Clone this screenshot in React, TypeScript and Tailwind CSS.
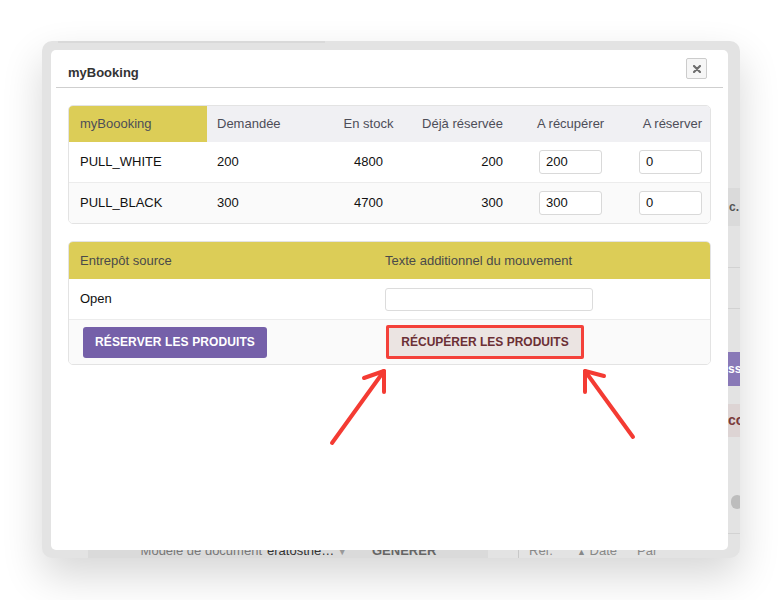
import React from "react";

const font = { fontFamily: '"Liberation Sans", Arial, sans-serif' };

function NumInput({ value, width }: { value: string; width: string }) {
  return (
    <div className={`${width} h-[24px] rounded-[3px] border border-[#d9d9d9] bg-white pl-[6px] flex items-center text-[13px] text-[#111]`}>
      {value}
    </div>
  );
}

const rows = [
  { name: "PULL_WHITE", asked: "200", stock: "4800", booked: "200", get: "200", book: "0" },
  { name: "PULL_BLACK", asked: "300", stock: "4700", booked: "300", get: "300", book: "0" },
];

function ProductsTable() {
  return (
    <div className="rounded-[5px] border border-[#e3e3e3] overflow-hidden text-[13px]">
      <div className="grid grid-cols-[138px_123px_77px_105px_100px_98px] h-[36px] bg-[#f0f0f3] text-[#4d4d58] items-center">
        <div className="h-full bg-[#dccd57] flex items-center pl-[11px]">myBoooking</div>
        <div className="pl-[10px]">Demandée</div>
        <div className="text-center">En stock</div>
        <div className="text-right pr-[9px]">Déjà réservée</div>
        <div className="pl-[25px]">A récupérer</div>
        <div className="text-right pr-[8px]">A réserver</div>
      </div>
      {rows.map((r, i) => (
        <div
          key={r.name}
          className={`grid grid-cols-[138px_123px_77px_105px_100px_98px] items-center text-[#111] ${i === 0 ? "h-[40px] bg-white" : "h-[41px] bg-[#fafafa] border-t border-[#ececec]"}`}
        >
          <div className="pl-[11px]">{r.name}</div>
          <div className="pl-[10px]">{r.asked}</div>
          <div className="text-center">{r.stock}</div>
          <div className="text-right pr-[9px]">{r.booked}</div>
          <div className="pl-[27px]">
            <NumInput value={r.get} width="w-[63px]" />
          </div>
          <div className="flex justify-end pr-[8px]">
            <NumInput value={r.book} width="w-[63px]" />
          </div>
        </div>
      ))}
    </div>
  );
}

function MoveTable() {
  return (
    <div className="rounded-[5px] border border-[#e3e3e3] overflow-hidden text-[13px]">
      <div className="grid grid-cols-[306px_335px] h-[37px] bg-[#dccd57] text-[#4a4a4a] items-center">
        <div className="pl-[11px]">Entrepôt source</div>
        <div className="pl-[10px]">Texte additionnel du mouvement</div>
      </div>
      <div className="grid grid-cols-[306px_335px] h-[40px] bg-white items-center text-[#111]">
        <div className="pl-[11px]">Open</div>
        <div className="pl-[10px]">
          <div className="w-[208px] h-[23px] rounded-[3px] border border-[#dcdcdc] bg-white" />
        </div>
      </div>
      <div className="grid grid-cols-[306px_335px] h-[45px] bg-[#fafafa] border-t border-[#ececec] items-center">
        <div className="pl-[14px]">
          <button className="w-[184px] h-[31px] rounded-[3px] bg-[#7560a9] text-white font-bold text-[12px] tracking-[0.1px]">
            RÉSERVER LES PRODUITS
          </button>
        </div>
        <div className="pl-[11px]">
          <button className="w-[198px] h-[34px] border-[3px] border-[#f4413a] rounded-[2px] bg-[#ebe4e2] text-[#6b2f35] font-bold text-[12px]">
            RÉCUPÉRER LES PRODUITS
          </button>
        </div>
      </div>
    </div>
  );
}

function Modal() {
  return (
    <div className="w-[677px] h-[500px] bg-white rounded-[5px] flex flex-col">
      <div className="mx-[5px] h-[38px] border-b border-[#cfcfcf] flex items-start justify-between pl-[12px] pr-[16px]">
        <span className="mt-[13px] font-bold text-[13px] text-[#333]">myBooking</span>
        <button className="mt-[8px] w-[21px] h-[21px] rounded-[2px] border border-[#cccccc] bg-[#f6f6f6] flex items-center justify-center">
          <svg width="8" height="8" viewBox="0 0 8 8">
            <path d="M1 1 L7 7 M7 1 L1 7" stroke="#6f6f6f" strokeWidth="2.2" strokeLinecap="round" />
          </svg>
        </button>
      </div>
      <div className="px-[17px] pt-[17px] flex flex-col gap-[17px]">
        <ProductsTable />
        <MoveTable />
      </div>
    </div>
  );
}

function RightStrip() {
  return (
    <div className="w-[12px] h-[500px] flex flex-col overflow-hidden text-[12px]">
      <div className="mt-[138px] h-[38px] bg-[#dadada] flex items-center pl-[1px] text-[#555] font-bold">c.</div>
      <div className="mt-[41px] border-t border-[#d2d2d2]" />
      <div className="mt-[40px] border-t border-[#d2d2d2]" />
      <div className="mt-[43px] h-[34px] bg-[#8979b7] flex items-center text-white font-bold whitespace-nowrap">ss</div>
      <div className="mt-[18px] h-[33px] bg-[#ddd4d4] flex items-center text-[#7a3a3a] font-bold text-[14px] whitespace-nowrap">co</div>
      <div className="mt-[58px] ml-[3px] w-[12px] h-[14px] rounded-full bg-[#bdbdbd]" />
      <div className="mt-[24px] border-t border-[#d2d2d2]" />
    </div>
  );
}

function BottomStrip() {
  return (
    <div className="h-[8px] overflow-hidden">
      <div className="flex h-[16px] -mt-[7px] text-[13px] leading-[16px] whitespace-nowrap">
        <div className="w-[46px]" />
        <div className="w-[400px] bg-[#dadada] flex">
          <span className="w-[174px] text-right text-[#777]">Modèle de document</span>
          <span className="w-[106px] pl-[5px] text-[#333]">
            eratosthe… <span className="text-[9px] text-[#999]">▼</span>
          </span>
          <span className="pl-[4px] font-bold text-[#666]">GÉNÉRER</span>
        </div>
        <div className="w-[30px]" />
        <div className="border-l border-[#c8c8c8] pl-[10px] flex text-[#888]">
          <span className="w-[48px]">Réf.</span>
          <span className="w-[60px]">
            <span className="text-[9px]">▲</span> Date
          </span>
          <span>Par</span>
        </div>
      </div>
    </div>
  );
}

export default function App() {
  return (
    <div className="relative w-[779px] h-[600px] bg-white overflow-hidden" style={font}>
      <div className="pt-[41px] pl-[42px]">
        <div className="w-[698px] h-[517px] rounded-[10px] bg-[#e3e3e3] shadow-[0_18px_40px_rgba(0,0,0,0.16)] flex flex-col overflow-hidden">
          <div className="h-[9px] flex">
            <div className="w-[16px]" />
            <div className="w-[267px] h-[2px] bg-[#d9d9d9]" />
          </div>
          <div className="flex">
            <div className="w-[9px]" />
            <Modal />
            <RightStrip />
          </div>
          <BottomStrip />
        </div>
      </div>
      <svg className="absolute inset-0 pointer-events-none" width="779" height="600" viewBox="0 0 779 600">
        <g stroke="#f43b33" strokeWidth="4" strokeLinecap="round" strokeLinejoin="round" fill="none">
          <path d="M332 443 L384 371" />
          <path d="M364 378 L384 371 L384 392" />
          <path d="M633 437 L585 371" />
          <path d="M604 376 L585 371 L585 392" />
        </g>
      </svg>
    </div>
  );
}
